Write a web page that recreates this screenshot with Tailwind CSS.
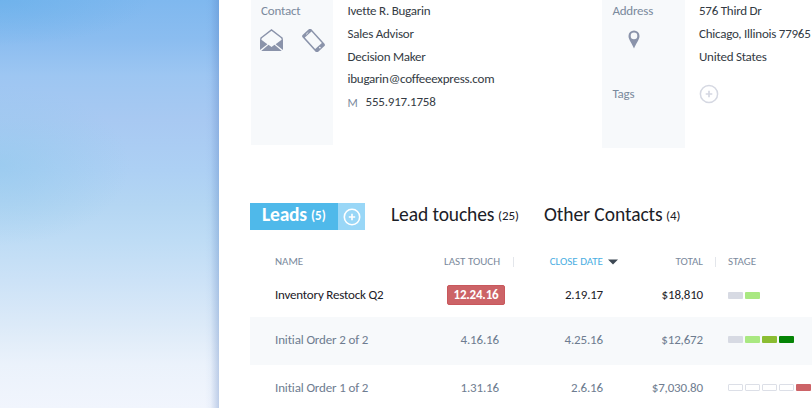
<!DOCTYPE html>
<html lang="en"><head><meta charset="utf-8"><title>Contact</title>
<script src="https://cdn.jsdelivr.net/npm/@tailwindcss/browser@4"></script></head>
<body class="w-[812px] h-[408px] overflow-hidden bg-white font-['Carlito','Lato',sans-serif] text-[13px] text-[#343b44]">
<div class="flex h-[408px]">
  <aside class="w-[219px] shrink-0 flex justify-end bg-[radial-gradient(ellipse_150px_45px_at_0_0,#62aee988,transparent),radial-gradient(ellipse_130px_80px_at_0_165px,#8ec8ec88,transparent),linear-gradient(180deg,#7fb8ef_0px,#8bbdf0_40px,#9dc6f2_75px,#a8c9f2_120px,#add0f4_170px,#b4d6f3_205px,#bedcf5_240px,#cce2f7_280px,#dceaf8_325px,#ebf2fb_365px,#f1f5fd_408px)]">
    <div class="w-[14px] bg-[linear-gradient(90deg,transparent,#5b83c80c_40%,#5078bb50)]"></div>
  </aside>
  <main class="w-[593px] shrink-0 bg-white">
    <section class="flex h-[203px] items-start pl-[32px] leading-[22.8px] tracking-[-0.24px]">
      <div class="w-[82px] shrink-0 h-[145px] bg-[#f7f9fb] pl-[10px] text-[#7b8a9d]">
        <div class="tracking-[-0.2px]">Contact</div>
        <div class="mt-[6px] flex items-start gap-[19px]">
          <svg class="-ml-px w-[23px] h-[23px] shrink-0" viewBox="0 0 23 23" fill="none"><path d="M1 10.500V9L11.500 1 22 9v1.500" stroke="#8a93aa" stroke-width="1.500"/><path d="M0 9.700 7.400 15.200 0 21ZM23 9.700 15.600 15.200 23 21ZM1.200 22 8.500 15.700 11.500 18 14.500 15.700 21.800 22Z" fill="#8a93aa"/></svg>
          <svg class="w-[23px] h-[23px] shrink-0" viewBox="0 0 23 23" fill="none"><g transform="rotate(-42 11.500 11.500)"><rect x="5.500" y="0" width="12" height="23" rx="2" fill="#8a93aa"/><rect x="7" y="3.500" width="9" height="15.500" fill="#f7f9fb"/><path d="M10 2h3" stroke="#f7f9fb" stroke-width=".7"/><circle cx="11.500" cy="21" r=".8" fill="#f7f9fb"/></g></svg>
        </div>
      </div>
      <div class="w-[269px] shrink-0 pl-[14.500px]">
        <div>Ivette R. Bugarin</div><div>Sales Advisor</div><div>Decision Maker</div><div>ibugarin@coffeeexpress.com</div>
        <div class="flex"><span class="w-[18px] text-[12px] text-[#7b8a9d] pt-px">M</span><span class="tracking-[-0.2px]">555.917.1758</span></div>
      </div>
      <div class="w-[83px] shrink-0 h-[148px] bg-[#f7f9fb] pl-[10.500px] text-[#7b8a9d]">
        <div>Address</div>
        <svg class="mt-[7px] ml-[15px] w-[12px] h-[19px]" viewBox="0 0 12 19"><path fill-rule="evenodd" d="M6 .5A5.500 5.500 0 0 0 .5 6c0 3.700 3.500 7.500 5.500 12.500C8 13.500 11.500 9.700 11.500 6A5.500 5.500 0 0 0 6 .5ZM6 2.600a3.300 3.300 0 1 1 0 6.600 3.300 3.300 0 0 1 0-6.600Z" fill="#8a93aa"/></svg>
        <div class="mt-[34px]">Tags</div>
      </div>
      <div class="shrink-0 pl-[14px] whitespace-nowrap">
        <div>576 Third Dr</div><div>Chicago, Illinois 77965</div><div>United States</div>
        <svg class="mt-[16px] w-[20px] h-[20px]" viewBox="0 0 20 20" fill="none" stroke="#d5d8e2"><circle cx="10" cy="10" r="8.600" stroke-width="1.500"/><path d="M6.700 10h6.600M10 6.700v6.600" stroke-width="1.700"/></svg>
      </div>
    </section>
    <nav class="ml-[31px] flex h-[27px] items-center whitespace-nowrap text-[19.5px] leading-[25px] text-[#1b2027]">
      <div class="flex h-[27px] w-[88px] items-center bg-[#4fb9ea] pl-[12px] text-white"><span class="w-[49px] font-bold pb-[5px] tracking-[-0.2px]">Leads</span><span class="text-[13px] font-bold pb-[3px]">(5)</span></div>
      <div class="flex h-[27px] w-[27px] items-center justify-center bg-[#99d7f7]"><svg class="w-[18px] h-[18px]" viewBox="0 0 18 18" fill="none" stroke="#fff" stroke-width="1.600"><circle cx="9" cy="9" r="7.700"/><path d="M5.800 9h6.400M9 5.800v6.400"/></svg></div>
      <div class="flex w-[179px] items-center pl-[26px]"><span class="w-[107px] pb-[5px] tracking-[-0.1px]">Lead touches</span><span class="text-[13px] pb-[3px]">(25)</span></div>
      <div class="flex items-center"><span class="w-[122px] pb-[5px] tracking-[-0.05px]">Other Contacts</span><span class="text-[13px] pb-[3px]">(4)</span></div>
    </nav>
    <section class="ml-[31px] w-[562px] whitespace-nowrap">
      <div class="flex h-[42px] items-center mt-[11px] text-[11px] text-[#7b8a9d]">
        <div class="w-[130px] pl-[25px]">NAME</div><div class="w-[120px] text-right">LAST TOUCH</div><div class="ml-[13px] h-[10px] w-px bg-[#e3e6eb]"></div>
        <div class="w-[89px] text-right text-[#4aaee2]">CLOSE DATE</div><svg class="ml-[5px] h-[6px] w-[10px]" viewBox="0 0 10 6"><path d="M0 .5h10L5 5.500Z" fill="#3d4854"/></svg>
        <div class="w-[85px] text-right">TOTAL</div><div class="ml-[12px] h-[10px] w-px bg-[#e3e6eb]"></div><div class="ml-[12px]">STAGE</div>
      </div>
      <div class="flex h-[34px] items-center mt-[-5px] mb-[5px] tracking-[-0.2px] text-[#1b2027]">
        <div class="w-[197px] pl-[25px]">Inventory Restock Q2</div><div class="h-[20px] w-[58px] rounded-[2px] border border-[#c9585c] bg-[#cc6367] text-center font-bold leading-[17px] text-white">12.24.16</div><div class="w-[98px] text-right">2.19.17</div><div class="w-[100px] text-right">$18,810</div>
        <div class="ml-[25px] flex gap-[2px]"><i class="h-[7px] w-[15px] rounded-[1px] bg-[#d7dae3]"></i><i class="h-[7px] w-[15px] rounded-[1px] bg-[#a9e881]"></i></div>
      </div>
      <div class="flex h-[48px] items-center bg-[#f7f9fb] pb-[3px] tracking-[-0.15px] text-[#6e7c90]">
        <div class="w-[150px] pl-[25px]">Initial Order 2 of 2</div><div class="w-[99px] text-right">4.16.16</div><div class="w-[104px] text-right">4.25.16</div><div class="w-[100px] text-right">$12,672</div>
        <div class="ml-[25px] flex gap-[2px]"><i class="h-[7px] w-[15px] rounded-[1px] bg-[#d7dae3]"></i><i class="h-[7px] w-[15px] rounded-[1px] bg-[#a9e881]"></i><i class="h-[7px] w-[15px] rounded-[1px] bg-[#8bbd32]"></i><i class="h-[7px] w-[15px] rounded-[1px] bg-[#058405]"></i></div>
      </div>
      <div class="flex h-[45px] items-center tracking-[-0.15px] text-[#6e7c90]">
        <div class="w-[150px] pl-[25px]">Initial Order 1 of 2</div><div class="w-[99px] text-right">1.31.16</div><div class="w-[104px] text-right">2.6.16</div><div class="w-[100px] text-right">$7,030.80</div>
        <div class="ml-[25px] flex gap-[2px]"><i class="h-[7px] w-[15px] rounded-[1px] border border-[#dcdfe7]"></i><i class="h-[7px] w-[15px] rounded-[1px] border border-[#dcdfe7]"></i><i class="h-[7px] w-[15px] rounded-[1px] border border-[#dcdfe7]"></i><i class="h-[7px] w-[15px] rounded-[1px] border border-[#dcdfe7]"></i><i class="h-[7px] w-[15px] rounded-[1px] bg-[#cc6367]"></i></div>
      </div>
    </section>
  </main>
</div>
</body></html>
